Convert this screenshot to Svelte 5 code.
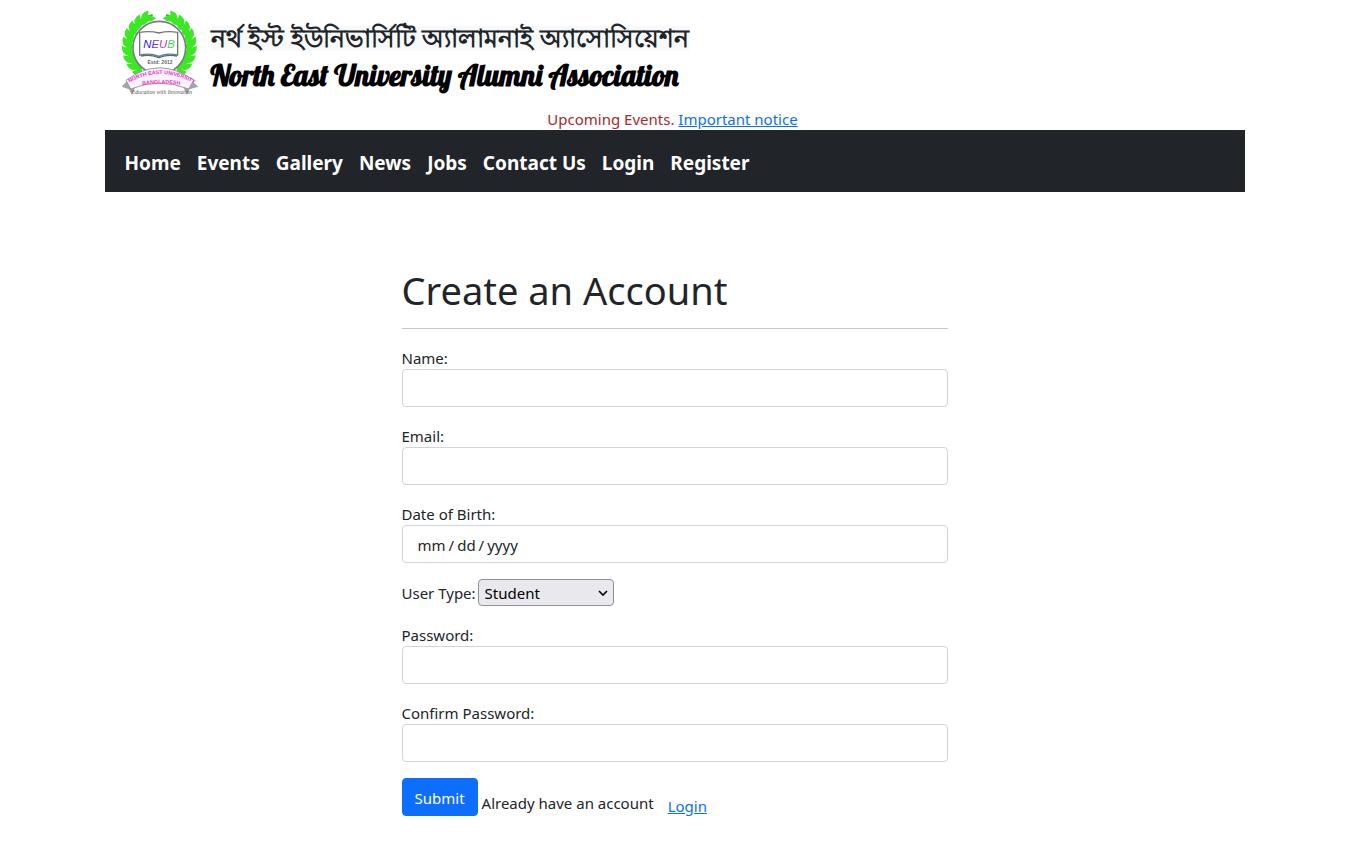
<script>
  const links = ['Home', 'Events', 'Gallery', 'News', 'Jobs', 'Contact Us', 'Login', 'Register'];
  const userTypes = ['Student', 'Alumni', 'Teacher'];

  // Laurel leaves: pairs of leaves along each side of the ring.
  const leaves = [];
  for (let i = 0; i < 9; i++) {
    const angle = 128 + i * 14.5;
    leaves.push({ angle, radius: 101, tilt: 60 }, { angle: angle + 6, radius: 89, tilt: 108 });
  }
</script>

<div class="container">
  <header>
    <svg class="logo" viewBox="45 30 240 261" role="img" aria-label="NEUB logo">
      {#each [1, -1] as side}
        <g transform={side === 1 ? null : 'translate(320 0) scale(-1 1)'}>
          <path d="M108 216 Q58 180 65 125 Q74 62 140 45" fill="none" stroke="#29c41c" stroke-width="6" />
          {#each leaves as leaf}
            <path
              d="M-17 0 Q0 -18 20 0 Q0 18 -17 0Z"
              fill="#3be822"
              transform="translate(160 139) rotate({leaf.angle}) translate({leaf.radius} 0) rotate({leaf.tilt})"
            />
          {/each}
        </g>
      {/each}
      <circle cx="160" cy="143" r="79" fill="#fff" stroke="#777c80" stroke-width="5" />
      <path d="M101 97 Q132 92 159 99 Q185 92 215 97 V165 Q184 158 159 169 Q133 158 101 165Z" fill="#fff" stroke="#73777c" stroke-width="4" />
      <path d="M105 168 Q132 162 159 173 Q185 162 213 168" fill="none" stroke="#3d718c" stroke-width="4" />
      <text x="159" y="145" class="neub" text-anchor="middle"><tspan fill="#2525ef">N</tspan><tspan fill="#6c37e0">E</tspan><tspan fill="#b235ce">U</tspan><tspan fill="#42d650">B</tspan></text>
      <text x="162" y="193" class="estd" text-anchor="middle">Estd: 2012</text>
      <path d="M47 260 L71 235 L91 255 L77 284 L69 268Z M277 260 L249 235 L229 255 L243 284 L251 268Z" fill="#a1a4a9" />
      <path d="M60 241 Q160 166 263 241 L248 267 Q160 232 74 267Z" fill="#f6f4f7" stroke="#9b9da1" stroke-width="3" />
      <path id="upper-arc" d="M70 249 Q160 194 266 251" fill="none" />
      <path id="lower-arc" d="M94 259 Q160 242 238 258" fill="none" />
      <text class="ribbon"><textPath href="#upper-arc" startOffset="50%" text-anchor="middle">NORTH EAST UNIVERSITY</textPath></text>
      <text class="ribbon"><textPath href="#lower-arc" startOffset="50%" text-anchor="middle">BANGLADESH</textPath></text>
      <text x="168" y="283" class="motto" text-anchor="middle">Education with Innovation</text>
    </svg>
    <div class="titles">
      <p class="bengali" lang="bn">নর্থ ইস্ট ইউনিভার্সিটি অ্যালামনাই অ্যাসোসিয়েশন</p>
      <p class="english">North East University Alumni Association</p>
    </div>
  </header>

  <p class="notice">Upcoming Events. <a href="#notice">Important notice</a></p>

  <nav>
    {#each links as link}
      <a href="#{link.toLowerCase().replace(' ', '-')}">{link}</a>
    {/each}
  </nav>

  <main>
    <h1>Create an Account</h1>
    <hr />
    <form>
      <div class="field">
        <label for="name">Name:</label>
        <input id="name" type="text" />
      </div>
      <div class="field">
        <label for="email">Email:</label>
        <input id="email" type="email" />
      </div>
      <div class="field">
        <label for="dob">Date of Birth:</label>
        <input id="dob" type="date" />
      </div>
      <div class="type-row">
        <label for="type">User Type:</label>
        <span class="select">
          <select id="type">
            {#each userTypes as type}
              <option>{type}</option>
            {/each}
          </select>
          <svg viewBox="0 0 10 10" aria-hidden="true"><path d="M1 3 L5 7 L9 3" /></svg>
        </span>
      </div>
      <div class="field">
        <label for="password">Password:</label>
        <input id="password" type="password" />
      </div>
      <div class="field">
        <label for="confirm">Confirm Password:</label>
        <input id="confirm" type="password" />
      </div>
      <div class="actions">
        <button type="submit">Submit</button>
        <span>Already have an account</span>
        <a href="#login">Login</a>
      </div>
    </form>
  </main>
</div>

<style>
  :global(body) {
    background: #fff;
    color: #212529;
    font: 15px/24px "Noto Sans", "Open Sans", sans-serif;
  }
  .container {
    max-width: 1140px;
    margin: 0 auto;
  }
  p, h1 { margin: 0; }
  a { color: #0d6efd; }

  header {
    display: flex;
    align-items: flex-start;
    gap: 10px;
    padding: 10px 16px 0;
    height: 98px;
    box-sizing: border-box;
  }
  .logo { width: 80px; height: 87px; flex: none; }
  .neub { font: italic 34px "Liberation Sans", sans-serif; }
  .estd { font: bold 15px "Liberation Sans", sans-serif; fill: #666; }
  .ribbon { font: bold 16px "Liberation Sans", sans-serif; fill: #f52bd2; }
  .motto { font: italic 17px "Liberation Serif", serif; fill: #55585c; }
  .titles {
    display: flex;
    flex-direction: column;
    align-items: flex-start;
    gap: 6px;
    padding-top: 16px;
    white-space: nowrap;
  }
  .bengali {
    padding-bottom: 2px;
    background: #f8f9fa;
    font-size: 25px;
    font-weight: 600;
    line-height: 23px;
  }
  .english {
    color: #000;
    font: bold 29px/36px Lobster, "Liberation Serif", serif;
  }

  .notice {
    padding: 10px 4px 0 0;
    line-height: 22px;
    text-align: center;
    color: brown;
  }

  nav {
    display: flex;
    flex-wrap: wrap;
    gap: 16px;
    padding: 18px 20px 14px;
    background: #212529;
  }
  nav a {
    color: #fff;
    font-size: 19px;
    font-weight: 700;
    line-height: 30px;
    text-decoration: none;
  }

  main {
    box-sizing: border-box;
    width: 50%;
    min-width: 320px;
    margin: 72px auto 0;
    padding: 0 12px 32px;
  }
  h1 { padding-top: 4px; font-size: 38px; font-weight: 400; line-height: 44px; }
  hr {
    height: 1px;
    margin: 16px 0;
    border: 0;
    background: #c7c8c9;
  }
  form { display: flex; flex-direction: column; gap: 16px; }
  .field { display: flex; flex-direction: column; }
  .field label { padding-top: 2px; line-height: 22px; }
  input {
    box-sizing: border-box;
    width: 100%;
    height: 38px;
    padding: 8px 12px 6px;
    border: 1px solid #ced4da;
    border-radius: 4px;
    background: #fff;
    color: #212529;
    font: inherit;
  }
  #dob { padding-left: 14px; }
  #dob::-webkit-datetime-edit-text { padding: 0 2px; }
  #dob::-webkit-calendar-picker-indicator { display: none; }

  .type-row { display: flex; align-items: center; gap: 2px; height: 27px; }
  .select { display: grid; align-items: center; }
  .select > * { grid-area: 1 / 1; }
  select {
    appearance: none;
    width: 136px;
    height: 27px;
    padding: 0 6px;
    border: 1px solid #8f8f9d;
    border-radius: 4px;
    background: #e9e9ed;
    color: #000;
    font: inherit;
  }
  .select svg {
    width: 10px;
    height: 10px;
    margin-right: 6px;
    justify-self: end;
    fill: none;
    stroke: #000;
    stroke-width: 1.6;
    pointer-events: none;
  }

  .actions { display: flex; align-items: flex-end; gap: 4px; }
  .actions span { line-height: 26px; }
  .actions button {
    height: 38px;
    padding: 8px 12px 6px;
    border: 1px solid #0d6efd;
    border-radius: 4px;
    background: #0d6efd;
    color: #fff;
    font: inherit;
    line-height: 22px;
  }
  .actions a { margin-left: 10px; line-height: 20px; }
</style>
